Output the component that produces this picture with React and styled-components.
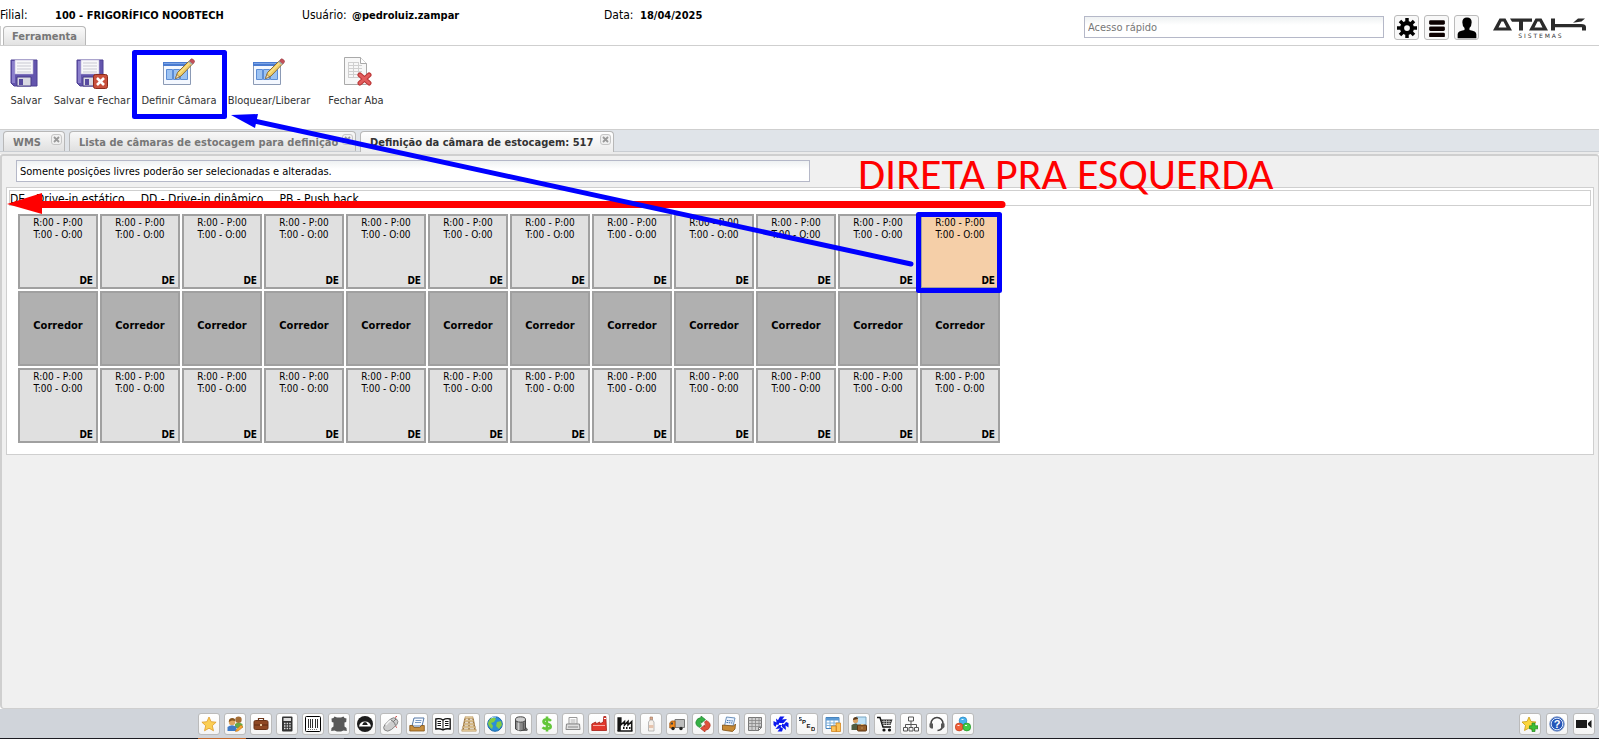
import React, { useState } from "react";
import styled, { createGlobalStyle, css } from "styled-components";

const GlobalStyle = createGlobalStyle`
  *, *::before, *::after { box-sizing: border-box; }
  html, body { margin: 0; padding: 0; }
  body {
    background: #fff;
    color: #000;
    font-family: Tahoma, "DejaVu Sans Condensed", "Noto Sans", sans-serif;
    font-size: 11px;
  }
  button, input { font-family: inherit; font-size: inherit; }
`;

const line = "#cfcfcf";

const Page = styled.div`
  position: relative;
  min-height: 100vh;
  display: flex;
  flex-direction: column;
  overflow: hidden;
`;

/* ---------- header ---------- */

const Header = styled.header`
  display: flex;
  justify-content: space-between;
  height: 46px;
  border-bottom: 1px solid ${line};
`;

const HeaderLeft = styled.div`
  display: flex;
  flex-direction: column;
  justify-content: space-between;
  padding-top: 6px;
`;

const Fields = styled.dl`
  display: flex;
  margin: 0;
  line-height: 19px;
`;

const Field = styled.div`
  display: flex;
  width: 302px;
`;

const FieldLabel = styled.dt`
  width: ${(p) => p.$w}px;
  font-size: 12px;
`;

const FieldValue = styled.dd`
  margin: 0;
  font-weight: bold;
  white-space: nowrap;
`;

const RibbonTabs = styled.div`
  display: flex;
  padding-left: 2px;
  border-left: 1px solid ${line};
`;

const RibbonTab = styled.button`
  height: 19px;
  padding: 1px 8px 0;
  border: 1px solid #b8b8b8;
  border-bottom: 0;
  border-radius: 4px 4px 0 0;
  background: linear-gradient(#fafafa, #e2e2e2);
  color: #777;
  font-weight: bold;
`;

const HeaderRight = styled.div`
  display: flex;
  align-items: flex-start;
  gap: 5px;
  padding: 15px 12px 0 0;
`;

const QuickAccess = styled.input`
  width: 300px;
  height: 22px;
  margin: 1px 5px 0 0;
  padding: 0 3px;
  border: 1px solid #b5b8c8;
  border-radius: 0;
  background: linear-gradient(#eef1f2, #fff 8px);
  &::placeholder { color: #777; opacity: 1; }
`;

const HeaderButton = styled.button`
  display: flex;
  align-items: center;
  justify-content: center;
  width: 25px;
  height: 25px;
  padding: 0;
  border: 1px solid #bbb;
  border-radius: 3px;
  background: #f8f8f8;
`;

const Logo = styled.svg`
  width: 94px;
  height: 22px;
  margin: 2px 0 0 9px;
`;

/* ---------- toolbar ---------- */

const Toolbar = styled.div`
  display: flex;
  align-items: flex-start;
  height: 83px;
  padding: 11px 4px 0;
`;

const ToolButton = styled.button`
  display: flex;
  flex-direction: column;
  align-items: center;
  gap: 3px;
  min-width: ${(p) => p.$w}px;
  padding: 0;
  border: 0;
  background: none;
  color: #333;
  line-height: 18px;
  white-space: nowrap;
`;

/* ---------- document tabs ---------- */

const TabStrip = styled.nav`
  display: flex;
  align-items: flex-end;
  gap: 4px;
  height: 23px;
  padding-left: 3px;
  border-top: 1px solid ${line};
  border-bottom: 1px solid #c9cdd2;
  background: #e0e4e9;
`;

const Tab = styled.div`
  display: flex;
  align-items: flex-start;
  justify-content: space-between;
  min-width: ${(p) => p.$w}px;
  height: 20px;
  padding: 2px 2px 0 9px;
  border: 1px solid #b8b8b8;
  border-bottom: 0;
  border-radius: 4px 4px 0 0;
  background: linear-gradient(#f8f8f8, #e0e0e0);
  color: #777;
  ${(p) => p.$active && css`
    background: linear-gradient(#fff, #ececec);
    color: #333;
    margin-bottom: -1px;
    height: 21px;
  `}
`;

const TabTitle = styled.button`
  padding: 0;
  border: 0;
  background: none;
  color: inherit;
  font-weight: bold;
  line-height: 17px;
  white-space: nowrap;
`;

const TabClose = styled.button`
  display: flex;
  align-items: center;
  justify-content: center;
  width: 11px;
  height: 11px;
  padding: 0;
  border: 1px solid #c6c6c6;
  border-radius: 3px;
  background: #f0f0f0;
`;

/* ---------- content ---------- */

const Content = styled.main`
  flex: 1;
  padding: 4px 4px 0;
  border: 2px solid ${line};
  border-width: 2px 1px 1px 2px;
  border-radius: 3px 3px 4px 4px;
  background: #f0f0f0;
`;

const TabFoot = styled.div`
  height: 2px;
  background: #ebebeb;
`;

const Notice = styled.input`
  display: block;
  width: 50%;
  height: 22px;
  margin-left: 10px;
  padding: 0 3px;
  border: 1px solid #b5b8c8;
  background: linear-gradient(#eef1f2, #fff 8px);
  color: #000;
`;

const Chamber = styled.section`
  margin-top: 5px;
  padding: 2px 2px 11px;
  border: 1px solid ${line};
  background: #fff;
`;

const Legend = styled.div`
  display: flex;
  gap: 16px;
  height: 16px;
  border: 1px solid ${line};
  font-size: 12px;
  line-height: 16px;
  white-space: nowrap;
`;

const Positions = styled.div`
  display: grid;
  grid-template-columns: repeat(12, 80px);
  grid-auto-rows: 75px;
  gap: 2px;
  padding: 8px 9px 0;
`;

const cellBox = css`
  padding: 0;
  border: 2px solid #a0a0a0;
  color: #000;
`;

const Position = styled.button`
  ${cellBox}
  display: flex;
  flex-direction: column;
  justify-content: space-between;
  padding-top: 1px;
  background: ${(p) => (p.$selected ? "#f5cfa8" : "#e0e0e0")};
  font-size: 10px;
  line-height: 12px;
`;

const Coordinates = styled.span`
  align-self: center;
  white-space: pre-line;
`;

const Kind = styled.span`
  align-self: flex-end;
  padding-right: 3px;
  font-weight: bold;
`;

const Corridor = styled.div`
  ${cellBox}
  display: flex;
  align-items: center;
  justify-content: center;
  padding-bottom: 6px;
  background: #b0b0b0;
  font-weight: bold;
`;

/* ---------- footer ---------- */

const Footer = styled.footer`
  display: flex;
  justify-content: space-between;
  padding: 4px 4px 3px 198px;
  background: #d0d4da;
`;

const Shortcuts = styled.div`
  display: flex;
  gap: ${(p) => p.$gap}px;
`;

const Shortcut = styled.button`
  display: flex;
  align-items: center;
  justify-content: center;
  width: 22px;
  height: 22px;
  padding: 0;
  border: 1px solid #bbb;
  border-radius: 3px;
  background: linear-gradient(#fff, #f4f4f4);
`;

const Taskbar = styled.div`
  display: flex;
  gap: 50px;
  height: 1px;
  padding-left: 198px;
  background: #1c1c22;
`;

const TaskMark = styled.span`
  width: 48px;
  background: ${(p) => p.$color};
`;

/* ---------- drawn notes lying over the page ---------- */

const Notes = styled.svg`
  position: absolute;
  top: 0;
  left: 0;
  width: 1010px;
  height: 300px;
  pointer-events: none;
`;

const NoteText = styled.p`
  position: absolute;
  top: 148px;
  left: 858px;
  margin: 0;
  color: #f00;
  font-family: Calibri, Carlito, "Open Sans", sans-serif;
  font-size: 44px;
  font-weight: 300;
  line-height: 52px;
  white-space: nowrap;
  pointer-events: none;
`;

/* ---------- icons ---------- */

const Icon16 = ({ children, size = 16 }) => (
  <svg width={size} height={size} viewBox="0 0 16 16" aria-hidden="true">{children}</svg>
);

const Floppy = () => (
  <>
    <path d="M1 3h26v26H4l-3-3z" fill="#6355ad" stroke="#4c3f92" />
    <path d="M2 4h3v22H2z" fill="#8c80cc" />
    <path d="M5 3h18v14H5z" fill="#f8f8fa" stroke="#b9b4d6" strokeWidth=".6" />
    <path d="M7 6h14M7 9h14M7 12h14M7 15h14" stroke="#c9c9d2" />
    <path d="M7 20h14v9H7z" fill="#d9d9e2" stroke="#463a86" />
    <path d="M9 22h4v6H9z" fill="#574a9f" />
  </>
);

const SaveIcon = () => (
  <svg width="32" height="32" viewBox="0 0 32 32"><Floppy /></svg>
);

const SaveCloseIcon = () => (
  <svg width="32" height="32" viewBox="0 0 32 32">
    <Floppy />
    <rect x="17.500" y="17.500" width="14" height="14" rx="2" fill="#c8503c" stroke="#8a2a1c" />
    <path d="M21 21l7 7M28 21l-7 7" stroke="#fff" strokeWidth="2.600" />
  </svg>
);

const EditTableIcon = () => (
  <svg width="32" height="32" viewBox="0 0 32 32">
    <path d="M.5 6.500h27v21H.5z" fill="#f4f8ff" stroke="#8b9ab5" />
    <path d="M0 5h28v4H0z" fill="#4a7bd0" />
    <path d="M1 6h26v1H1z" fill="#7ba4e6" />
    <path d="M3.500 12.500h6v10h-6zM10.500 12.500h6v10h-6zM17.500 12.500h7v10h-7z" fill="#9cc2f2" stroke="#5c8dd6" />
    <path d="M12.500 21.500l2-6L26 4l3.500 3L18 19z" fill="#f2cf68" stroke="#80622c" strokeWidth=".9" />
    <path d="M12.500 21.500l1.500-4 2.500 2.500z" fill="#f6e3c0" stroke="#80622c" strokeWidth=".6" />
    <path d="M16 16.500L27 5.500" stroke="#fff0a8" />
    <path d="M27.500 2.500q1-1.500 3 .2t.6 2.800L30 7l-3.500-3z" fill="#c8505a" stroke="#8d3a40" strokeWidth=".6" />
    <path d="M25.500 4.500l3.700 3" stroke="#a9b4b4" strokeWidth="1.500" />
  </svg>
);

const CloseDocIcon = () => (
  <svg width="32" height="32" viewBox="0 0 32 32">
    <path d="M4.500.5h16l6 6v21h-22z" fill="#f7f7f7" stroke="#a9a9a9" />
    <path d="M20.500.5v6h6" fill="#fff" stroke="#a9a9a9" />
    <path d="M8 5.500h11M8 8.500h14M8 11.500h14M8 14.500h14M8 17.500h12M8 20.500h10M8.500 5v16M13.500 5v16M18.500 5v16" stroke="#cfcfcf" />
    <path d="M20 18l9 8M29 18l-9 8" stroke="#b93434" strokeWidth="5" strokeLinecap="round" />
    <path d="M20 18l9 8M29 18l-9 8" stroke="#e25c5c" strokeWidth="3" strokeLinecap="round" />
  </svg>
);

const footerIcons = [
  ["Favoritos", <path d="M8 1l2.100 4.700 5 .5-3.800 3.500 1.200 5.100L8 12.200l-4.500 2.600 1.200-5.100L.9 6.200l5-.5z" fill="#fbcf55" stroke="#dd9a2a" strokeWidth=".8" />],
  ["Pessoas", <><circle cx="11.500" cy="3.800" r="3.200" fill="#a46d35" /><path d="M8 12V8q3-2.500 7.500 0v4z" fill="#68a744" /><circle cx="5" cy="6" r="3.200" fill="#dda563" /><path d="M1.800 6q0-4 3.500-4 3 0 3 3L5 4.500z" fill="#87561f" /><path d="M.5 15V11q4.500-3.500 9 0v4z" fill="#3f7ac6" /><path d="M9 14l5-5 2 2-5 4-2.500.5z" fill="#f5a631" stroke="#c3731c" strokeWidth=".6" /></>],
  ["Maleta", <><path d="M5.500 4.500V2.500h5v2" fill="none" stroke="#6a3317" strokeWidth="1.200" /><rect x="1" y="4.500" width="14" height="9" rx="1.500" fill="#8f4823" stroke="#6a3317" /><path d="M1 9h14" stroke="#5e2b12" /><path d="M7 8h2v2H7z" fill="#e8c89c" /></>],
  ["Calculadora", <><rect x="3" y=".5" width="10.500" height="15" rx="1" fill="#333" /><path d="M4.500 2h7.500v3H4.500z" fill="#ddd" /><path d="M5 7.500h7M5 10h7M5 12.500h7" stroke="#ddd" strokeWidth="1.500" strokeDasharray="1.500 1.100" /></>],
  ["Código de barras", <><rect x=".5" y=".5" width="15" height="15" rx="1" fill="#fff" stroke="#000" /><path d="M3.500 3v9M5.500 3v9M7.500 3v9M10.500 3v9M12.500 3v9" stroke="#333" /><path d="M3 13.500h10" stroke="#777" strokeDasharray="1 1" /></>],
  ["Couro", <path d="M3.500.5L6 1.500h4l2.500-1L13.500 2l2 .5-.3 3.500-1.700.5v4l2 1.500.3 3-3.300-.5-2.500 1H6l-2.500-1-3.300.5.300-3 2-1.500v-4L.8 6 .5 2.500l2-.5z" fill="#585858" />],
  ["Medidor", <><circle cx="8" cy="8" r="8" fill="#1c1c1c" /><path d="M2 10.500a6.100 6.100 0 0 1 12 0z" fill="#fff" /><path d="M5.200 9q.8-3 2.800-3t2.800 3z" fill="#1c1c1c" /></>],
  ["Mouse", <><path d="M1.500 14Q-.5 11.500 2 8.500L7.500 3q3.500-2.500 6 0t.5 5.500l-5.500 5q-4 3-7 .5z" fill="#cdcdcd" stroke="#858585" /><path d="M7 4q4 .5 5.500 5.500M10 6l3-3" stroke="#777" fill="none" /><path d="M3 9q3-4 5-4.500" stroke="#f4f4f4" strokeWidth="1.500" fill="none" /><path d="M12 1.500l2-1.200M12.500 10.500l1.500 1" stroke="#c44" /></>],
  ["Arquivo", <><path d="M5 2h10l-2 8H3z" fill="#f6faff" stroke="#5477a5" /><path d="M6.500 4.500h6M6 6.500h6" stroke="#7899c5" /><path d="M.8 9.500h3l1 2h6l1.500-2h3V15H.8z" fill="#c68d3d" stroke="#835315" strokeWidth=".8" /></>],
  ["Livro", <><path d="M8 4Q5 2 .8 3v10q4-.8 7.200 1 3-1.800 7.200-1V3Q11 2 8 4z" fill="#fff" stroke="#111" strokeWidth="1.300" /><path d="M8 4v10M2.500 5.500h3.500M2.500 7.500h3.500M2.500 9.500h3.500M10 5.500h3.500M10 7.500h3.500M10 9.500h3.500" stroke="#111" /></>],
  ["Palete", <><path d="M4 2.500L2 14M8 2v13M12 2.500L14 14" stroke="#9a7440" strokeWidth="1.500" /><path d="M4 .8h8v1.700H4zM3.500 4h9v1.700h-9zM2.800 7.200h10.400v1.700H2.800zM1.800 10.200h12.400v1.800H1.800zM.8 13.400h14.400v1.800H.8z" fill="#ead3a3" stroke="#b08c54" strokeWidth=".6" /></>],
  ["Mundo", <><circle cx="8" cy="8" r="7.300" fill="#2a8fd6" stroke="#1b66a8" /><path d="M3 3q4-3 6 0l-2 3-3 1 2 3-1 3Q1 10 1 7zM10 6l4-1 1 4-3 4-3-3z" fill="#83cb43" /><path d="M4 2q3-1.500 5-1" stroke="#bfe4ff" fill="none" /></>],
  ["Tanque", <><path d="M11 9l4 4.500-1 1.500h-4z" fill="#666" /><path d="M2.500 3.500v9.500q5 3.500 10 0V3.500z" fill="#888" stroke="#454545" /><ellipse cx="7.500" cy="3.500" rx="5" ry="2.700" fill="#cfcfcf" stroke="#444" /><path d="M5.500 6.500v8" stroke="#ccc" strokeWidth="1.800" /><path d="M10.500 6.500v8" stroke="#5a5a5a" strokeWidth="1.500" /></>],
  ["Financeiro", <path d="M12 4.800Q10.500 3.200 8 3.200 4.500 3.200 4.500 5.500T8 8t3.700 2.500T8 12.800q-3 0-4.500-1.500M8 .5v15" fill="none" stroke="#63c63a" strokeWidth="2.600" />],
  ["Impressora", <><path d="M4 1.500h8V8H4z" fill="#fff" stroke="#999" /><path d="M5.500 4h5M5.500 6h5" stroke="#aaa" /><path d="M1.500 8h13l.5 5.500H1z" fill="#dedede" stroke="#888" /><path d="M3 11h10" stroke="#888" /></>],
  ["Fábrica", <><path d="M.8 14.500V8l4-2v2l4-2v2l3.500-2L12.800.5h2l.7 14z" fill="#e2382c" stroke="#a51d14" strokeWidth=".8" /><path d="M2 9.500h12" stroke="#f9a8a0" strokeWidth="1" /><path d="M13 2.500h2" stroke="#fff" /></>],
  ["Indústria", <><path d="M1.200 15V2h2.600v7l3.700-3.500V9l3.500-3.500V9l3.700-3.500V15" fill="#fff" stroke="#161616" strokeWidth="1.600" /><path d="M1.200 2h2.600v13H1.200z" fill="#161616" /><path d="M.5 15h15" stroke="#161616" strokeWidth="1.500" /><path d="M6 12h1.500M9 12h1.500M12 12h1.500" stroke="#161616" strokeWidth="1.800" /></>],
  ["Frasco", <><path d="M7 1h2.500v3H7z" fill="#d9a98c" stroke="#9d735a" strokeWidth=".6" /><path d="M5.500 6L7 4h2.500L11 6v9H5.500z" fill="#f6efe8" stroke="#aaa" strokeWidth=".8" /><path d="M6 9h4.500v3H6z" fill="#e6c4ae" /></>],
  ["Transporte", <><path d="M6 3.500h9.500v8H6z" fill="#bdbdbd" stroke="#777" /><path d="M.8 7l1.700-2H6v7H.8z" fill="#f58b1c" stroke="#9d510e" strokeWidth=".8" /><path d="M2 6.500h2v2H1.500z" fill="#444" /><circle cx="4" cy="12.500" r="1.700" fill="#222" /><circle cx="12" cy="12.500" r="1.700" fill="#222" /></>],
  ["Sincronizar", <><path d="M5 11.500Q.5 10 .8 6 2 1.800 6 1.500V0l4.500 3.500L6.500 7V5.200Q4.500 6.500 6.500 10z" fill="#35b045" stroke="#1d7a2c" strokeWidth=".6" /><path d="M11 4.500q4.500 1.500 4.200 5.500-1.200 4.200-5.200 4.500V16l-4.500-3.500L9.500 9v1.800Q11.500 9.500 9.500 6z" fill="#e0503a" stroke="#a12b1a" strokeWidth=".6" /></>],
  ["Documentos", <><path d="M5.500 1l8.500 1-2 8H3.500z" fill="#eaf3ff" stroke="#6c91bb" /><path d="M6 4.500l6 .5M5.500 6.500l6 .5" stroke="#3f6fa8" strokeDasharray="1.500 .7" /><path d="M1.500 9l11 1 2-2-.5 5-2.500 2.500L1.500 14z" fill="#c78a35" stroke="#7f4f12" strokeWidth=".8" /></>],
  ["Planilha", <><path d="M1.500 1.500h13v10l-3 3h-10z" fill="#cfcfcf" stroke="#777" /><path d="M1.500 4.500h13M1.500 7.500h13M1.500 10.500h13M5 1.500v13M8.500 1.500v13M12 1.500v10" stroke="#888" strokeWidth=".8" /><path d="M14.500 11.500h-3v3z" fill="#fff" stroke="#777" /></>],
  ["Integração", <g fill="#0b18ee"><path d="M7 .5h4.500L9 3.500l5-.5-3.500 4H6.500L4.500 5z" /><path d="M15.500 7v4.500L12.500 9.500l.5 4.500-4-3V7.500l2 1 2-2.500z" /><path d="M9 15.500H4.500L7 12.500 2.500 13 6 9h3l-1.500 2 2.500 1.500z" /><path d="M.5 9V5l3 1.500L3 2.500l3.500 3-1 3.500-2-.5-1 2.500z" /></g>],
  ["SPED", <g fill="#111" fontSize="6" fontWeight="bold" fontFamily="Liberation Sans, sans-serif"><text x="-1" y="5">S</text><text x="3" y="8">P</text><text x="7.500" y="11.500">E</text><text x="12" y="15">D</text></g>],
  ["Tabela de custos", <><path d="M1 1.500h13v11H1z" fill="#fff" stroke="#4683bd" /><path d="M1 2h13v2.500H1z" fill="#5b9ad4" /><path d="M1 7h13M1 9.500h13M5 4v8M9 4v8" stroke="#7fb1dc" /><path d="M6.500 10h5v5.500h-5zM11 7h4.500v8.500H11z" fill="#fbc35b" stroke="#d38520" strokeWidth=".8" /></>],
  ["Escritório", <><path d="M5 1h10v9H5z" fill="#bfe2f7" stroke="#7ba5c1" /><circle cx="4.500" cy="4.500" r="2.600" fill="#dca365" /><path d="M2 4q0-3 3-3 2.500.5 2 2z" fill="#56371a" /><path d="M.5 14V9q4-3 7 0v5z" fill="#4f5c42" /><rect x="6.500" y="9" width="9" height="6" rx="1" fill="#96602c" stroke="#5b330e" /><path d="M10 8.500h2.500M10.500 12h1" stroke="#e8c07f" /></>],
  ["Carrinho", <><path d="M0 1.500h3L6 11h8" fill="none" stroke="#111" strokeWidth="1.500" /><path d="M3.500 3.500h12L13.500 9H5.300z" fill="#333" /><path d="M5 5.500h9M5.500 7.500h8M7 4v5M9.500 4v5M12 4v5" stroke="#ddd" strokeWidth=".6" /><circle cx="7" cy="14" r="1.600" fill="#111" /><circle cx="12.500" cy="14" r="1.600" fill="#111" /></>],
  ["Organograma", <g fill="none" stroke="#555"><path d="M5.500 1h5v4h-5zM.5 11.500h4v3.500h-4zM6 11.500h4v3.500H6zM11.500 11.500h4v3.500h-4zM8 5v6.500M2.500 11V8.500h11V11" /></g>],
  ["Suporte", <><path d="M2 9V7.500a6 6 0 0 1 12 0V9M13 11q0 3-4.500 3.500" fill="none" stroke="#444" strokeWidth="1.600" /><path d="M.5 7.500h3.500v5H2L.5 11zM12 7.500h3.500V11L14 12.500h-2z" fill="#555" /></>],
  ["Módulos", <><circle cx="8" cy="4.800" r="3.800" fill="#48b4ee" stroke="#2380bd" strokeWidth=".7" /><circle cx="4.200" cy="11" r="3.900" fill="#f0603a" stroke="#bd3d1b" strokeWidth=".7" /><circle cx="11.800" cy="11" r="3.900" fill="#44cc49" stroke="#249428" strokeWidth=".7" /><path d="M6.500 3.500h2M2.500 9.500h2M10 9.500h2" stroke="#fff" strokeWidth=".9" /></>],
];

const rightIcons = [
  ["Adicionar favorito", <><path d="M7 1l2 4.500 5 .5-3.500 3.500 1 5L7 12l-4.500 2.500 1-5L0 6l5-.5z" fill="#fbd63c" stroke="#c69a1b" strokeWidth=".8" /><path d="M10 7h3v2.800h3v3h-3v2.700h-3v-2.700H7.500v-3H10z" fill="#3dbf35" stroke="#23851e" strokeWidth=".7" /></>],
  ["Ajuda", <><circle cx="8" cy="8" r="7.300" fill="#2456b8" stroke="#8aa0c9" /><circle cx="8" cy="8" r="5.800" fill="none" stroke="#dbe7fa" /><text x="8" y="12" textAnchor="middle" fontSize="11" fontWeight="bold" fill="#fff" fontFamily="Liberation Sans, sans-serif">?</text></>],
  ["Vídeo", <path d="M0 4h11v8H0zM12 7l3.500-3v8L12 9z" fill="#1b1b1b" />],
];

/* ---------- data ---------- */

const tools = [
  ["Salvar", SaveIcon, 44],
  ["Salvar e Fechar", SaveCloseIcon, 88],
  ["Definir Câmara", EditTableIcon, 86],
  ["Bloquear/Liberar", EditTableIcon, 94],
  ["Fechar Aba", CloseDocIcon, 80],
];

const tabs = [
  ["WMS", 62],
  ["Lista de câmaras de estocagem para definição", 287],
  ["Definição da câmara de estocagem: 517", 254],
];

const columns = Array.from({ length: 12 }, (_, i) => i);

function PositionRow({ row, selected, onSelect }) {
  return columns.map((c) => {
    const id = `${row}-${c}`;
    return (
      <Position key={id} $selected={selected === id} onClick={() => onSelect(id)}>
        <Coordinates>{"R:00 - P:00\nT:00 - O:00"}</Coordinates>
        <Kind>DE</Kind>
      </Position>
    );
  });
}

export default function App() {
  const [selected, setSelected] = useState("0-11");
  const [activeTab, setActiveTab] = useState(2);

  return (
    <>
      <GlobalStyle />
      <Page>
        <Header>
          <HeaderLeft>
            <Fields>
              <Field><FieldLabel $w={55}>Filial:</FieldLabel><FieldValue>100 - FRIGORÍFICO NOOBTECH</FieldValue></Field>
              <Field><FieldLabel $w={50}>Usuário:</FieldLabel><FieldValue>@pedroluiz.zampar</FieldValue></Field>
              <Field><FieldLabel $w={36}>Data:</FieldLabel><FieldValue>18/04/2025</FieldValue></Field>
            </Fields>
            <RibbonTabs><RibbonTab>Ferramenta</RibbonTab></RibbonTabs>
          </HeaderLeft>
          <HeaderRight>
            <QuickAccess aria-label="Acesso rápido" placeholder="Acesso rápido" />
            <HeaderButton aria-label="Configurações">
              <Icon16 size={20}>
                <path d="M8 0v16M0 8h16M2.400 2.400l11.200 11.200M13.600 2.400L2.400 13.600" stroke="#000" strokeWidth="2.800" />
                <circle cx="8" cy="8" r="4" fill="none" stroke="#000" strokeWidth="3.200" />
                <circle cx="8" cy="8" r="2.300" fill="#f8f8f8" />
              </Icon16>
            </HeaderButton>
            <HeaderButton aria-label="Menu">
              <Icon16 size={18}>
                <g fill="#0c0000">
                  <rect x="1" y="1" width="14" height="4" rx="1.200" />
                  <rect x="1" y="6.600" width="14" height="4" rx="1.200" />
                  <rect x="1" y="12.200" width="14" height="4" rx="1.200" />
                </g>
              </Icon16>
            </HeaderButton>
            <HeaderButton aria-label="Perfil">
              <Icon16 size={22}><path d="M8 .3q3.400 0 3.400 3.500 0 2.800-1.600 4.200v1.500q5 .8 5 3V15.500H1.200V12.500q0-2.200 5-3V8Q4.600 6.600 4.600 3.800 4.600.3 8 .3z" fill="#000" /></Icon16>
            </HeaderButton>
            <Logo viewBox="0 0 94 22" role="img" aria-label="ATAK Sistemas">
              <g fill="#2b2b2b" fillRule="evenodd">
                <path d="M0 13.500L6.500 1.500h6L19 13.500zM5.500 10.500h8L10.500 4.500h-2z" />
                <path d="M17 1.500h22v3.200h-9V13.500h-4V4.700h-7z" />
                <path d="M36 13.500L42.500 1.500h6L55 13.500zM41.500 10.500h8L46.500 4.500h-2z" />
                <path d="M58 1.500h4v5.500h26q5 0 5 3v3.500h-4v-3.200H62v3.200h-4z" />
                <path d="M80 5.800l5-4.300h7l-3.500 3z" />
              </g>
              <text x="47" y="21" textAnchor="middle" fontSize="6" fontFamily="DejaVu Sans, sans-serif" fill="#333">S I S T E M A S</text>
            </Logo>
          </HeaderRight>
        </Header>

        <Toolbar>
          {tools.map(([label, Glyph, w]) => (
            <ToolButton key={label} $w={w}><Glyph />{label}</ToolButton>
          ))}
        </Toolbar>

        <TabStrip>
          {tabs.map(([title, w], i) => (
            <Tab key={title} $w={w} $active={i === activeTab}>
              <TabTitle onClick={() => setActiveTab(i)}>{title}</TabTitle>
              <TabClose aria-label={`Fechar ${title}`}>
                <svg width="7" height="7" viewBox="0 0 7 7"><path d="M1 1l5 5M6 1L1 6" stroke="#999" strokeWidth="1.800" /></svg>
              </TabClose>
            </Tab>
          ))}
        </TabStrip>
        <TabFoot />

        <Content>
          <Notice aria-label="Aviso" readOnly value="Somente posições livres poderão ser selecionadas e alteradas." />
          <Chamber>
            <Legend>
              <span>DE - Drive-in estático</span>
              <span>DD - Drive-in dinâmico</span>
              <span>PB - Push back</span>
            </Legend>
            <Positions>
              <PositionRow row={0} selected={selected} onSelect={setSelected} />
              {columns.map((c) => <Corridor key={c}>Corredor</Corridor>)}
              <PositionRow row={2} selected={selected} onSelect={setSelected} />
            </Positions>
          </Chamber>
        </Content>

        <Footer>
          <Shortcuts $gap={4}>
            {footerIcons.map(([name, art]) => <Shortcut key={name} aria-label={name}><Icon16>{art}</Icon16></Shortcut>)}
          </Shortcuts>
          <Shortcuts $gap={5}>
            {rightIcons.map(([name, art]) => <Shortcut key={name} aria-label={name}><Icon16>{art}</Icon16></Shortcut>)}
          </Shortcuts>
        </Footer>
        <Taskbar><TaskMark $color="#c0682c" /><TaskMark $color="#55555c" /></Taskbar>

        <Notes viewBox="0 0 1010 300" aria-hidden="true">
          <path d="M40 204.500H1002" stroke="#f00" strokeWidth="7" strokeLinecap="round" />
          <path d="M7 204L42 193v21z" fill="#f00" />
          <g fill="none" stroke="#00f" strokeWidth="5" strokeLinejoin="round">
            <path d="M134.500 52.500h90v64h-90z" />
            <path d="M918.500 214.500h81v76h-81z" />
            <path d="M254 121L911 264" strokeLinecap="round" />
          </g>
          <path d="M231 115l27-1-3 14z" fill="#00f" />
        </Notes>
        <NoteText>DIRETA PRA ESQUERDA</NoteText>
      </Page>
    </>
  );
}
